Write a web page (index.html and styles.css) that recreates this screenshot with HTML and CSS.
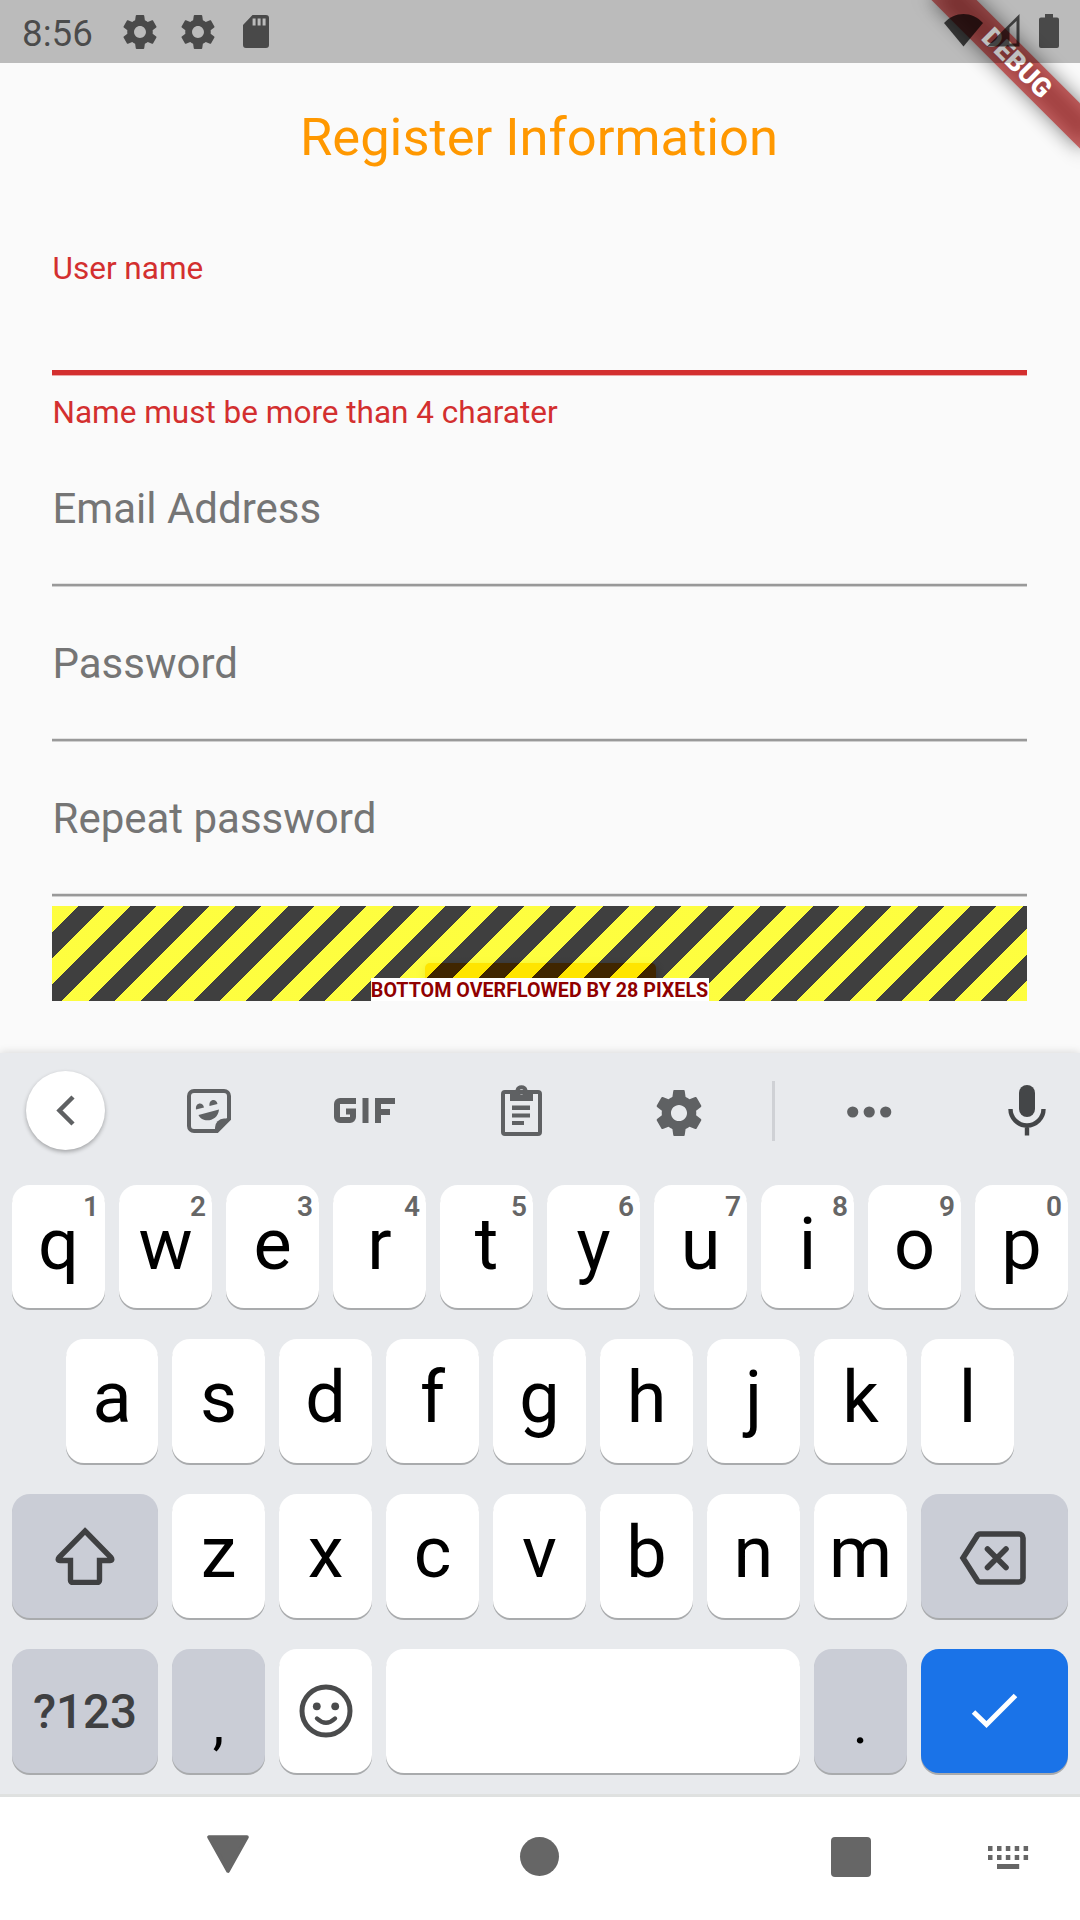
FILE: index.html
```html
<!DOCTYPE html>
<html lang="en">
<head>
<meta charset="utf-8">
<title>Register Information</title>
<link rel="stylesheet" href="styles.css">
</head>
<body>
<svg class="defs" width="0" height="0" aria-hidden="true">
  <symbol id="gear" viewBox="2 2 20 20"><path d="M19.43 12.98c.04-.32.07-.64.07-.98s-.03-.66-.07-.98l2.11-1.65c.19-.15.24-.42.12-.64l-2-3.46c-.12-.22-.39-.3-.61-.22l-2.49 1c-.52-.4-1.08-.73-1.69-.98l-.38-2.65C14.46 2.18 14.25 2 14 2h-4c-.25 0-.46.18-.49.42l-.38 2.65c-.61.25-1.17.59-1.69.98l-2.49-1c-.23-.09-.49 0-.61.22l-2 3.46c-.13.22-.07.49.12.64l2.11 1.65c-.04.32-.07.65-.07.98s.03.66.07.98l-2.11 1.65c-.19.15-.24.42-.12.64l2 3.46c.12.22.39.3.61.22l2.49-1c.52.4 1.08.73 1.69.98l.38 2.65c.03.24.24.42.49.42h4c.25 0 .46-.18.49-.42l.38-2.65c.61-.25 1.17-.59 1.69-.98l2.49 1c.23.09.49 0 .61-.22l2-3.46c.12-.22.07-.49-.12-.64l-2.11-1.65zM12 15.5c-1.93 0-3.5-1.57-3.5-3.5s1.57-3.5 3.5-3.5 3.5 1.57 3.5 3.5-1.57 3.5-3.5 3.5z"/></symbol>
</svg>
<div class="screen">
  <div class="banner"><div class="banner-shadow"></div><div class="banner-band">DEBUG</div></div>
  <header class="status">
    <span class="clock">8:56</span>
    <svg class="st-gear" width="34" height="34"><use href="#gear"/></svg>
    <svg class="st-gear" width="34" height="34"><use href="#gear"/></svg>
    <svg class="st-sd" width="26" height="33" viewBox="0 0 26 33"><path fill-rule="evenodd" d="M9.5 0H23a3 3 0 0 1 3 3v27a3 3 0 0 1-3 3H3a3 3 0 0 1-3-3V10zM9.6 3.4v7h3v-7zm5 0v7h3v-7zm5 0v7h3v-7z"/></svg>
    <svg class="st-wifi" width="39" height="33" viewBox="0 0 39 33"><path d="M0 9C11-3 28-3 39 9L19.500 32.500z"/></svg>
    <svg class="st-signal" width="33" height="33" viewBox="0 0 33 33"><path fill-rule="evenodd" d="M0 32.500L32.500 0v32.500zM22.500 13.500v16H29.500V7z"/></svg>
    <svg class="st-battery" width="20" height="34" viewBox="0 0 20 34"><path d="M6 0h8v3.500h4a2 2 0 0 1 2 2V32a2 2 0 0 1-2 2H2a2 2 0 0 1-2-2V5.500a2 2 0 0 1 2-2h4z"/></svg>
  </header>

  <main class="app">
    <h1 class="title">Register Information</h1>
    <div class="field-error">
      <label class="label-small">User name</label>
      <div class="rule-error"></div>
      <p class="helper">Name must be more than 4 charater</p>
    </div>
    <div class="field"><label>Email Address</label><div class="rule"></div></div>
    <div class="field"><label>Password</label><div class="rule"></div></div>
    <div class="field"><label>Repeat password</label><div class="rule"></div></div>
    <div class="overflow">
      <div class="button-peek"></div>
      <div class="stripes"></div>
      <span class="overflow-label">BOTTOM OVERFLOWED BY 28 PIXELS</span>
    </div>
  </main>

  <section class="keyboard">
    <div class="toolbar">
      <div class="back"><svg width="19" height="31" viewBox="0 0 19 31"><path d="M17 2L3.500 15.500 17 29" fill="none" stroke="#5f6163" stroke-width="4.500"/></svg></div>
      <svg class="tb-sticker" width="44" height="44" viewBox="0 0 44 44"><path d="M7 2H37a5 5 0 0 1 5 5V30L30 42H7a5 5 0 0 1-5-5V7a5 5 0 0 1 5-5z" fill="none" stroke="#5f6163" stroke-width="4"/><path d="M43 29.500H37a9 9 0 0 0-9 9V43h3z"/><path d="M9 20.500c-1-7 7-8 8-2zM22.500 17c-1-7 7-8 8-2zM11.500 26L32 20.500C31 33 15 34.500 11.500 26z"/></svg>
      <svg class="tb-gif" width="61" height="25" viewBox="0 0 61 25"><path d="M22 3H6a3 3 0 0 0-3 3v13a3 3 0 0 0 3 3h10a3 3 0 0 0 3-3v-5.500h-7M31.500 0v25M44 25V3H61M44 14h12" fill="none" stroke="#5f6163" stroke-width="6"/></svg>
      <svg class="tb-clip" width="41" height="51" viewBox="0 0 41 51"><rect x="2" y="7" width="37" height="42" rx="2" fill="none" stroke="#5f6163" stroke-width="4"/><path fill-rule="evenodd" d="M9 5h5.500a6.200 6.200 0 0 1 12 0H32v11H9zM20.500 4.300a2.600 2.600 0 1 0 .01 0z"/><path d="M11 20.500h18v4.500H11zM11 28.500h18v4H11zM11 36h12v4H11z"/></svg>
      <svg class="tb-gear" width="46" height="46"><use href="#gear"/></svg>
      <i class="tb-divider"></i>
      <svg class="tb-dots" width="45" height="12" viewBox="0 0 45 12"><circle cx="5.700" cy="6" r="5.600"/><circle cx="22.200" cy="6" r="5.600"/><circle cx="38.700" cy="6" r="5.600"/></svg>
      <svg class="tb-mic" width="38" height="51" viewBox="0 0 38 51"><rect x="11" y="0" width="16" height="32" rx="8"/><path d="M2.500 24a16.500 16.500 0 0 0 33 0M19 40v10.500" fill="none" stroke="#444648" stroke-width="4.400"/></svg>
    </div>
    <div class="row row-1">
      <div class="key"><sup>1</sup>q</div><div class="key"><sup>2</sup>w</div><div class="key"><sup>3</sup>e</div><div class="key"><sup>4</sup>r</div><div class="key"><sup>5</sup>t</div><div class="key"><sup>6</sup>y</div><div class="key"><sup>7</sup>u</div><div class="key"><sup>8</sup>i</div><div class="key"><sup>9</sup>o</div><div class="key"><sup>0</sup>p</div>
    </div>
    <div class="row row-2">
      <div class="key">a</div><div class="key">s</div><div class="key">d</div><div class="key">f</div><div class="key">g</div><div class="key">h</div><div class="key">j</div><div class="key">k</div><div class="key">l</div>
    </div>
    <div class="row">
      <div class="key wide mod"><svg width="60" height="58" viewBox="0 0 60 58"><path d="M30 4L56 30.500Q58 33.500 55 33.500H44.500V53.500a2 2 0 0 1-2 2h-25a2 2 0 0 1-2-2V33.500H5Q2 33.500 4 30.500z" fill="none" stroke="#3f4042" stroke-width="5.400"/></svg></div>
      <div class="key">z</div><div class="key">x</div><div class="key">c</div><div class="key">v</div><div class="key">b</div><div class="key">n</div><div class="key">m</div>
      <div class="key wider mod"><svg class="backspace" width="68" height="54" viewBox="0 0 68 54"><path d="M21 3H60a4 4 0 0 1 4 4V47a4 4 0 0 1-4 4H21Q19 51 18 49L4 27 18 5Q19 3 21 3z" fill="none" stroke="#3f4042" stroke-width="5.600"/><path d="M28.500 18L47 36.500M47 18L28.500 36.500" stroke="#3f4042" stroke-width="5.600" stroke-linecap="round"/></svg></div>
    </div>
    <div class="row">
      <div class="key wide mod symbols">?123</div>
      <div class="key mod punct">,</div>
      <div class="key"><svg width="54" height="54" viewBox="0 0 54 54"><g fill="none" stroke="#4a4b4c" stroke-width="5"><circle cx="27" cy="27" r="24"/><path d="M18 34.500Q27 43 36 34.500" stroke-width="4.400" stroke-linecap="round"/></g><circle cx="17.800" cy="22.300" r="3.900" fill="#4a4b4c"/><circle cx="36.200" cy="22.300" r="3.900" fill="#4a4b4c"/></svg></div>
      <div class="key space"></div>
      <div class="key mod punct">.</div>
      <div class="key wider enter"><svg width="48" height="36" viewBox="0 0 48 36"><path d="M2.500 19L15.500 31.500 44.500 2.500" fill="none" stroke="#fff" stroke-width="5"/></svg></div>
    </div>
  </section>

  <nav class="nav">
    <svg class="nv-back" width="42" height="38" viewBox="0 0 42 38"><path d="M2 2H40L21 36z" fill="#666" stroke="#666" stroke-width="3.600" stroke-linejoin="round"/></svg>
    <i class="nv-home"></i>
    <i class="nv-recent"></i>
    <svg class="nv-ime" width="41" height="24" viewBox="0 0 41 24"><path d="M0 0h4.500v5H0zM9 0h4.500v5H9zM17.800 0h4.500v5h-4.500zM26.700 0h4.500v5h-4.500zM35.600 0h4.500v5h-4.500zM0 9h4.500v5H0zM9 9h4.500v5H9zM17.800 9h4.500v5h-4.500zM26.700 9h4.500v5h-4.500zM35.600 9h4.500v5h-4.500zM9 18h22.200v5H9z" fill="#666"/></svg>
  </nav>
</div>
</body>
</html>
```
FILE: styles.css
```css
* { box-sizing: border-box; margin: 0; padding: 0; }
body { font-family: Roboto, "Noto Sans", sans-serif; background: #fafafa; }
.defs { position: absolute; }
svg { display: block; flex: none; }
.screen {
  position: relative; width: 1080px; height: 1920px; overflow: hidden;
  display: flex; flex-direction: column; background: #fafafa;
}

/* debug ribbon */
.banner {
  position: absolute; z-index: 1; left: 912px; top: 47px;
  width: 210px; height: 32px; transform: rotate(45deg);
}
.banner-shadow { position: absolute; inset: 0; background: rgba(0, 0, 0, .5); filter: blur(9.600px); }
.banner-band {
  position: absolute; inset: 0; background: rgba(183, 28, 28, .627);
  color: #fff; font-size: 26.800px; font-weight: 900; line-height: 32px; text-align: center;
}

/* status bar */
.status {
  position: absolute; z-index: 2; inset: 0 0 auto 0; height: 63px;
  display: flex; align-items: center; background: rgba(0, 0, 0, .25);
  color: rgba(0, 0, 0, .61); fill: rgba(0, 0, 0, .61); padding: 0 21px;
}
.clock { width: 102px; font-size: 36.750px; line-height: 42px; padding: 5px 0 0 1px; }
.st-gear { margin-right: 24px; }
.st-sd { margin-left: 4px; }
.st-wifi { margin-left: auto; margin-right: 4px; margin-top: -3px; fill: rgba(0, 0, 0, .7); }
.st-signal { margin-right: 19px; margin-top: -2px; fill: rgba(0, 0, 0, .65); }
.st-battery { margin-top: -1px; }

/* form */
.app { height: 1053px; padding: 106px 53px 0 52px; }
.title { height: 62px; font-size: 52.500px; line-height: 62px; font-weight: 400; color: #ff9800; text-align: center; padding-right: 1px; }
.field-error { padding-top: 82px; height: 264px; color: #d32f2f; font-size: 31.500px; line-height: 37px; }
.label-small { display: block; height: 37px; padding-left: .5px; }
.rule-error { margin-top: 83px; height: 6px; background: linear-gradient(#d32f2f 5px, #eba6a6 5px); }
.helper { margin-top: 18px; white-space: nowrap; padding-left: .5px; }
.field { height: 155px; padding-top: 52px; font-size: 42px; line-height: 50px; color: #757575; }
.field label { display: block; height: 99px; padding-left: .5px; }
.rule { height: 4px; background: linear-gradient(#e2e2e2 1px, #999 1px 3px, #cfcfcf 3px); }

.overflow { position: relative; height: 95px; margin-top: 9px; overflow: hidden; display: flex; align-items: flex-end; justify-content: center; }
.button-peek {
  position: absolute; left: 373px; top: 57px; width: 231px; height: 60px;
  border-radius: 5px; background: #ff9800; box-shadow: 0 3px 8px rgba(0, 0, 0, .3);
}
.stripes {
  position: absolute; inset: 0;
  background: repeating-linear-gradient(135deg, rgba(255, 255, 0, .75) 0 18.562px, rgba(0, 0, 0, .75) 18.562px 37.123px);
}
.overflow-label {
  position: relative; width: 338px; height: 23px; background: #fff; color: #900000;
  font-size: 19.690px; line-height: 25px; font-weight: 700; text-align: center; white-space: nowrap;
}

/* keyboard */
.keyboard {
  position: relative; height: 744px; background: #e8eaed; border-bottom: 3px solid #dfe1e0;
  box-shadow: 0 -1px 8px rgba(0, 0, 0, .13);
  display: flex; flex-direction: column;
}
.toolbar { height: 132px; padding: 0 34px 17px 26px; display: flex; align-items: center; fill: #5f6163; flex: none; }
.back {
  width: 79px; height: 79px; border-radius: 50%; background: #fff;
  display: flex; align-items: center; justify-content: center;
  box-shadow: 0 2px 4px rgba(0, 0, 0, .3);
}
.tb-sticker { margin-left: 82px; }
.tb-gif { margin-left: 103px; }
.tb-clip { margin-left: 106px; }
.tb-gear { margin-left: 114px; margin-top: 4px; }
.tb-divider { width: 3px; height: 60px; margin-left: 70px; background: #cfd1d5; }
.tb-dots { margin-left: 72px; margin-top: 2px; }
.tb-mic { margin-left: auto; fill: #444648; }
.row { display: flex; gap: 14px; height: 124px; margin: 0 12px 31px; flex: none; }
.row-1 { height: 123px; }
.row-2 { padding-left: 54px; }
.key {
  position: relative; width: 93px; height: 100%; flex: none; border-radius: 18px; background: #fff; color: #000;
  box-shadow: 0 2px 0 #a9abad;
  display: flex; align-items: center; justify-content: center;
  font-size: 72px; line-height: 84px; padding-bottom: 6px;
}
.row-1 .key { padding-bottom: 4px; }
.key svg { margin-top: 5px; }
.row-2 .key:first-child { width: 92px; }
.wide { width: 146px; }
.wider { width: 147px; }
.mod { background: #cacdd6; }
.key sup {
  position: absolute; right: 6px; top: 5px; font-size: 28px; line-height: 33px;
  font-weight: 600; color: #666;
}
.key .backspace { margin: 10px 3px 0 0; }
.symbols { font-size: 47.500px; font-weight: 500; color: #3f4042; padding-bottom: 0; padding-top: 2px; }
.punct { font-size: 58px; align-items: flex-end; padding-bottom: 8px; }
.space { width: 414px; }
.enter { background: #1a73e8; }

/* navigation bar */
.nav { position: relative; flex: 1; background: #fff; display: flex; padding: 38px 51px 0 207px; }
.nv-home { width: 39px; height: 39px; border-radius: 50%; background: #666; margin: 2px 0 0 271px; }
.nv-recent { width: 40px; height: 40px; border-radius: 4px; background: #666; margin: 2px 0 0 272px; }
.nv-ime { margin: 11px 0 0 auto; }
```
